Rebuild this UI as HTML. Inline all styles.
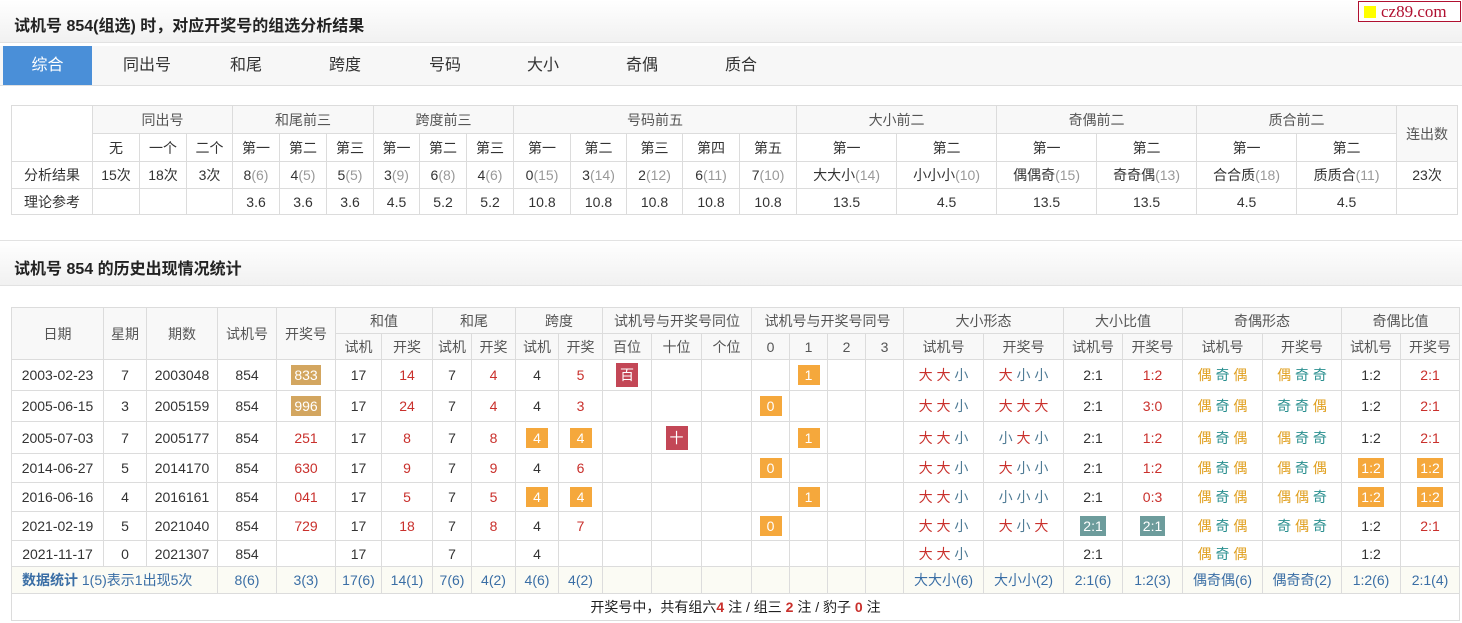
<!DOCTYPE html>
<html><head><meta charset="utf-8"><style>
*{margin:0;padding:0;box-sizing:border-box}
body{width:1462px;height:623px;background:#fff;font-family:"Liberation Sans","Noto Sans CJK SC",sans-serif;color:#333;position:relative;overflow:hidden}
.bar{position:absolute;left:0;width:1462px;background:linear-gradient(#fff,#f1f1f1);border-bottom:1px solid #e2e2e2}
.bar h2{font-size:16px;font-weight:bold;color:#222;position:absolute;left:14px}
.logo{position:absolute;left:1358px;top:1px;width:103px;height:21px;border:1px solid #b01030;background:#fff;color:#b01030;font-family:"Liberation Serif",serif;font-size:17px;line-height:19px;padding-left:22px}
.logo i{position:absolute;left:5px;top:4px;width:12px;height:12px;background:#ffff00}
.tabs{position:absolute;left:0;top:46px;width:1462px;height:40px;background:#f7f7f7;border-bottom:1px solid #e0e0e0}
.tabs span{position:absolute;top:0;height:39px;line-height:39px;font-size:16px;color:#333;text-align:center;width:90px}
.tabs span.a{background:#4a8fd8;color:#fff}
table{position:absolute;border-collapse:collapse;table-layout:fixed;font-size:14px}
td{border:1px solid #dcdcdc;text-align:center;white-space:nowrap;overflow:hidden;padding:0}
.h td{background:#f8f8f8;color:#555}
.g{color:#999}
.r{color:#c9302c}
.b{display:inline-block;color:#fff;line-height:20px;padding:0 3px;min-width:22px}
.bn{background:#d3a660}.bo{background:#f5a83c}.br{background:#c34756;padding:2px 4px}.bt{background:#6d9c9c}
.d{color:#c9302c}.x{color:#4f7b95}.o{color:#e0a020}.j{color:#2a8f8f}
.s td{background:#fbfbf4;color:#3a6ea5}
.ft{letter-spacing:0}
</style></head><body>
<div class="bar" style="top:0;height:43px"><h2 style="top:12px">试机号 854(组选) 时，对应开奖号的组选分析结果</h2></div>
<div class="logo"><i></i>cz89.com</div>
<div class="tabs">
<span class="a" style="left:3px;width:89px">综合</span>
<span style="left:102px">同出号</span><span style="left:201px">和尾</span><span style="left:300px">跨度</span><span style="left:400px">号码</span><span style="left:498px">大小</span><span style="left:597px">奇偶</span><span style="left:696px">质合</span>
</div>

<table style="left:11px;top:105px;width:1446px">
<colgroup><col style="width:81px"><col style="width:47px"><col style="width:47px"><col style="width:46px"><col style="width:47px"><col style="width:47px"><col style="width:47px"><col style="width:46px"><col style="width:47px"><col style="width:47px"><col style="width:57px"><col style="width:56px"><col style="width:56px"><col style="width:57px"><col style="width:57px"><col style="width:100px"><col style="width:100px"><col style="width:100px"><col style="width:100px"><col style="width:100px"><col style="width:100px"><col style="width:61px"></colgroup>
<tr class="h" style="height:28px"><td rowspan="2" style="background:#fff"></td><td colspan="3">同出号</td><td colspan="3">和尾前三</td><td colspan="3">跨度前三</td><td colspan="5">号码前五</td><td colspan="2">大小前二</td><td colspan="2">奇偶前二</td><td colspan="2">质合前二</td><td rowspan="2">连出数</td></tr>
<tr style="height:28px"><td>无</td><td>一个</td><td>二个</td><td>第一</td><td>第二</td><td>第三</td><td>第一</td><td>第二</td><td>第三</td><td>第一</td><td>第二</td><td>第三</td><td>第四</td><td>第五</td><td>第一</td><td>第二</td><td>第一</td><td>第二</td><td>第一</td><td>第二</td></tr>
<tr style="height:27px"><td>分析结果</td><td>15次</td><td>18次</td><td>3次</td><td>8<span class="g">(6)</span></td><td>4<span class="g">(5)</span></td><td>5<span class="g">(5)</span></td><td>3<span class="g">(9)</span></td><td>6<span class="g">(8)</span></td><td>4<span class="g">(6)</span></td><td>0<span class="g">(15)</span></td><td>3<span class="g">(14)</span></td><td>2<span class="g">(12)</span></td><td>6<span class="g">(11)</span></td><td>7<span class="g">(10)</span></td><td>大大小<span class="g">(14)</span></td><td>小小小<span class="g">(10)</span></td><td>偶偶奇<span class="g">(15)</span></td><td>奇奇偶<span class="g">(13)</span></td><td>合合质<span class="g">(18)</span></td><td>质质合<span class="g">(11)</span></td><td>23次</td></tr>
<tr style="height:26px"><td>理论参考</td><td></td><td></td><td></td><td>3.6</td><td>3.6</td><td>3.6</td><td>4.5</td><td>5.2</td><td>5.2</td><td>10.8</td><td>10.8</td><td>10.8</td><td>10.8</td><td>10.8</td><td>13.5</td><td>4.5</td><td>13.5</td><td>13.5</td><td>4.5</td><td>4.5</td><td></td></tr>
</table>

<div class="bar" style="top:240px;height:46px;border-top:1px solid #e2e2e2"><h2 style="top:14px">试机号 854 的历史出现情况统计</h2></div>

<table style="left:11px;top:307px;width:1448px">
<colgroup><col style="width:92px"><col style="width:43px"><col style="width:71px"><col style="width:59px"><col style="width:59px"><col style="width:46px"><col style="width:51px"><col style="width:39px"><col style="width:44px"><col style="width:43px"><col style="width:44px"><col style="width:49px"><col style="width:50px"><col style="width:50px"><col style="width:38px"><col style="width:38px"><col style="width:38px"><col style="width:38px"><col style="width:80px"><col style="width:80px"><col style="width:59px"><col style="width:60px"><col style="width:80px"><col style="width:79px"><col style="width:59px"><col style="width:59px"></colgroup>
<tr class="h" style="height:26px"><td rowspan="2">日期</td><td rowspan="2">星期</td><td rowspan="2">期数</td><td rowspan="2">试机号</td><td rowspan="2">开奖号</td><td colspan="2">和值</td><td colspan="2">和尾</td><td colspan="2">跨度</td><td colspan="3">试机号与开奖号同位</td><td colspan="4">试机号与开奖号同号</td><td colspan="2">大小形态</td><td colspan="2">大小比值</td><td colspan="2">奇偶形态</td><td colspan="2">奇偶比值</td></tr>
<tr class="h" style="height:26px"><td>试机</td><td>开奖</td><td>试机</td><td>开奖</td><td>试机</td><td>开奖</td><td>百位</td><td>十位</td><td>个位</td><td>0</td><td>1</td><td>2</td><td>3</td><td>试机号</td><td>开奖号</td><td>试机号</td><td>开奖号</td><td>试机号</td><td>开奖号</td><td>试机号</td><td>开奖号</td></tr>
<tr style="height:31px"><td>2003-02-23</td><td>7</td><td>2003048</td><td>854</td><td><span class="b bn">833</span></td><td>17</td><td class="r">14</td><td>7</td><td class="r">4</td><td>4</td><td class="r">5</td><td><span class="b br">百</span></td><td></td><td></td><td></td><td><span class="b bo">1</span></td><td></td><td></td><td><span class="d">大 大</span> <span class="x">小</span></td><td><span class="d">大</span> <span class="x">小 小</span></td><td>2:1</td><td class="r">1:2</td><td><span class="o">偶</span> <span class="j">奇</span> <span class="o">偶</span></td><td><span class="o">偶</span> <span class="j">奇 奇</span></td><td>1:2</td><td class="r">2:1</td></tr>
<tr style="height:31px"><td>2005-06-15</td><td>3</td><td>2005159</td><td>854</td><td><span class="b bn">996</span></td><td>17</td><td class="r">24</td><td>7</td><td class="r">4</td><td>4</td><td class="r">3</td><td></td><td></td><td></td><td><span class="b bo">0</span></td><td></td><td></td><td></td><td><span class="d">大 大</span> <span class="x">小</span></td><td><span class="d">大 大 大</span></td><td>2:1</td><td class="r">3:0</td><td><span class="o">偶</span> <span class="j">奇</span> <span class="o">偶</span></td><td><span class="j">奇 奇</span> <span class="o">偶</span></td><td>1:2</td><td class="r">2:1</td></tr>
<tr style="height:32px"><td>2005-07-03</td><td>7</td><td>2005177</td><td>854</td><td class="r">251</td><td>17</td><td class="r">8</td><td>7</td><td class="r">8</td><td><span class="b bo">4</span></td><td><span class="b bo">4</span></td><td></td><td><span class="b br">十</span></td><td></td><td></td><td><span class="b bo">1</span></td><td></td><td></td><td><span class="d">大 大</span> <span class="x">小</span></td><td><span class="x">小</span> <span class="d">大</span> <span class="x">小</span></td><td>2:1</td><td class="r">1:2</td><td><span class="o">偶</span> <span class="j">奇</span> <span class="o">偶</span></td><td><span class="o">偶</span> <span class="j">奇 奇</span></td><td>1:2</td><td class="r">2:1</td></tr>
<tr style="height:29px"><td>2014-06-27</td><td>5</td><td>2014170</td><td>854</td><td class="r">630</td><td>17</td><td class="r">9</td><td>7</td><td class="r">9</td><td>4</td><td class="r">6</td><td></td><td></td><td></td><td><span class="b bo">0</span></td><td></td><td></td><td></td><td><span class="d">大 大</span> <span class="x">小</span></td><td><span class="d">大</span> <span class="x">小 小</span></td><td>2:1</td><td class="r">1:2</td><td><span class="o">偶</span> <span class="j">奇</span> <span class="o">偶</span></td><td><span class="o">偶</span> <span class="j">奇</span> <span class="o">偶</span></td><td><span class="b bo">1:2</span></td><td><span class="b bo">1:2</span></td></tr>
<tr style="height:29px"><td>2016-06-16</td><td>4</td><td>2016161</td><td>854</td><td class="r">041</td><td>17</td><td class="r">5</td><td>7</td><td class="r">5</td><td><span class="b bo">4</span></td><td><span class="b bo">4</span></td><td></td><td></td><td></td><td></td><td><span class="b bo">1</span></td><td></td><td></td><td><span class="d">大 大</span> <span class="x">小</span></td><td><span class="x">小 小 小</span></td><td>2:1</td><td class="r">0:3</td><td><span class="o">偶</span> <span class="j">奇</span> <span class="o">偶</span></td><td><span class="o">偶 偶</span> <span class="j">奇</span></td><td><span class="b bo">1:2</span></td><td><span class="b bo">1:2</span></td></tr>
<tr style="height:29px"><td>2021-02-19</td><td>5</td><td>2021040</td><td>854</td><td class="r">729</td><td>17</td><td class="r">18</td><td>7</td><td class="r">8</td><td>4</td><td class="r">7</td><td></td><td></td><td></td><td><span class="b bo">0</span></td><td></td><td></td><td></td><td><span class="d">大 大</span> <span class="x">小</span></td><td><span class="d">大</span> <span class="x">小</span> <span class="d">大</span></td><td><span class="b bt">2:1</span></td><td><span class="b bt">2:1</span></td><td><span class="o">偶</span> <span class="j">奇</span> <span class="o">偶</span></td><td><span class="j">奇</span> <span class="o">偶</span> <span class="j">奇</span></td><td>1:2</td><td class="r">2:1</td></tr>
<tr style="height:26px"><td>2021-11-17</td><td>0</td><td>2021307</td><td>854</td><td></td><td>17</td><td></td><td>7</td><td></td><td>4</td><td></td><td></td><td></td><td></td><td></td><td></td><td></td><td></td><td><span class="d">大 大</span> <span class="x">小</span></td><td></td><td>2:1</td><td></td><td><span class="o">偶</span> <span class="j">奇</span> <span class="o">偶</span></td><td></td><td>1:2</td><td></td></tr>
<tr class="s" style="height:27px"><td colspan="3" style="text-align:left;padding-left:10px"><b>数据统计</b> 1(5)表示1出现5次</td><td>8(6)</td><td>3(3)</td><td>17(6)</td><td>14(1)</td><td>7(6)</td><td>4(2)</td><td>4(6)</td><td>4(2)</td><td></td><td></td><td></td><td></td><td></td><td></td><td></td><td>大大小(6)</td><td>大小小(2)</td><td>2:1(6)</td><td>1:2(3)</td><td>偶奇偶(6)</td><td>偶奇奇(2)</td><td>1:2(6)</td><td>2:1(4)</td></tr>
<tr style="height:27px"><td colspan="26" style="color:#222">开奖号中，共有组六<b class="r">4</b> 注 / 组三 <b class="r">2</b> 注 / 豹子 <b class="r">0</b> 注</td></tr>
</table>
</body></html>
